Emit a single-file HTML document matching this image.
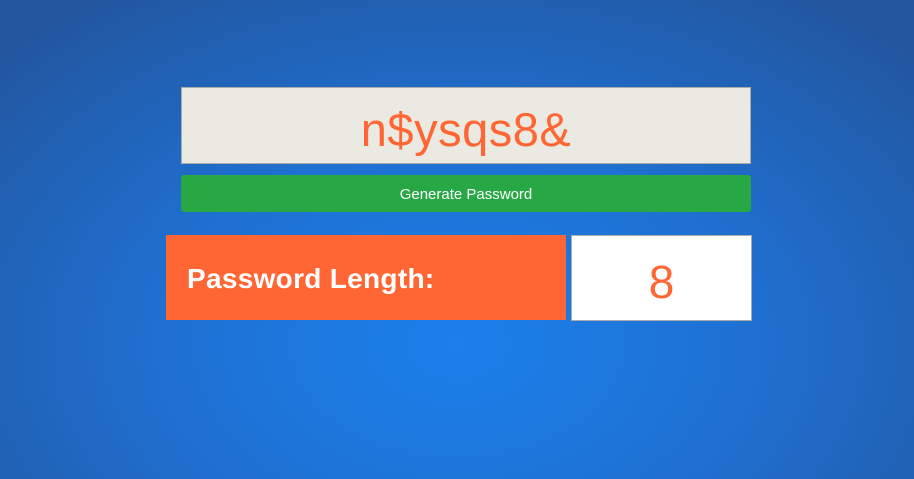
<!DOCTYPE html><html><head><style>
html,body{margin:0;width:914px;height:479px;overflow:hidden}
body{background:radial-gradient(ellipse 620px 420px at 457px 345px,#1b80ec 0%,#1f6fcf 50%,#2257a0 100%);font-family:"Liberation Sans",sans-serif;position:relative}
.pw{position:absolute;left:181px;top:87px;width:568px;height:75px;background:#eae9e2;border:1px solid #aaa;color:#ff6633;font-size:47px;text-align:center;line-height:84px;letter-spacing:0.5px}
.btn{position:absolute;left:181px;top:175px;width:570px;height:37px;background:#28a745;border-radius:3px;color:#fff;font-size:15px;text-align:center;line-height:39px}
.lab{position:absolute;left:166px;top:235px;width:400px;height:85px;background:#ff6633;color:#fff;font-weight:bold;font-size:28px;line-height:88px;padding-left:21px;box-sizing:border-box;letter-spacing:0.3px}
.num{position:absolute;left:571px;top:235px;width:179px;height:84px;background:#fff;border:1px solid #aaa;color:#ff6633;font-size:46px;text-align:center;line-height:92px}
</style></head><body>
<div class="pw">n$ysqs8&amp;</div>
<div class="btn">Generate Password</div>
<div class="lab">Password Length:</div>
<div class="num">8</div>
</body></html>
